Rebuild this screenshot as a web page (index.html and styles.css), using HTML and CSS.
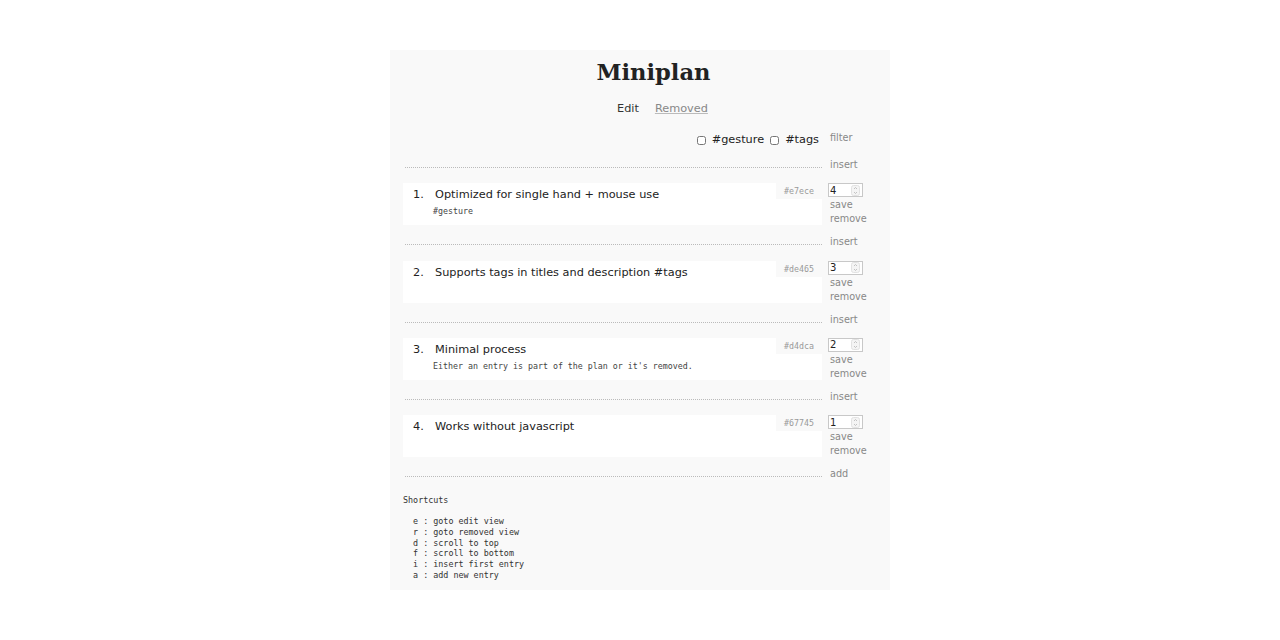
FILE: index.html
```html
<!DOCTYPE html>
<html lang="en">
<head>
    <meta charset="UTF-8">
    <meta name="viewport" content="width=device-width, initial-scale=1.0">
    <title>Miniplan</title>
    <link rel="stylesheet" href="styles.css">
</head>
<body>
    <div class="page">
        <h1>Miniplan</h1>
        <nav class="nav">
            <span class="current">Edit</span>
            <a href="#" class="nav-link">Removed</a>
        </nav>

        <div class="filter-row">
            <div class="tags">
                <label><input type="checkbox"> #gesture</label>
                <label><input type="checkbox"> #tags</label>
            </div>
            <a href="#" class="action filter">filter</a>
        </div>

        <div class="slot">
            <div class="dots"></div>
            <a href="#" class="action">insert</a>
        </div>

        <div class="entry">
            <div class="card">
                <div class="title"><span class="num">1.</span>Optimized for single hand + mouse use</div>
                <div class="desc">#gesture</div>
                <span class="hash">#e7ece</span>
            </div>
            <div class="controls">
                <div class="prio"><input type="text" value="4"><svg class="spin" width="9" height="11" viewBox="0 0 9 11"><rect x="0.5" y="0.5" width="8" height="10" rx="2" fill="#f4f4f4" stroke="#e2e2e2"/><path d="M3 4 L4.5 2.5 L6 4 M3 7 L4.5 8.5 L6 7" fill="none" stroke="#b5b5b5" stroke-width="0.8"/></svg></div>
                <a href="#" class="action">save</a>
                <a href="#" class="action">remove</a>
            </div>
        </div>

        <div class="slot">
            <div class="dots"></div>
            <a href="#" class="action">insert</a>
        </div>

        <div class="entry">
            <div class="card">
                <div class="title"><span class="num">2.</span>Supports tags in titles and description #tags</div>
                <span class="hash">#de465</span>
            </div>
            <div class="controls">
                <div class="prio"><input type="text" value="3"><svg class="spin" width="9" height="11" viewBox="0 0 9 11"><rect x="0.5" y="0.5" width="8" height="10" rx="2" fill="#f4f4f4" stroke="#e2e2e2"/><path d="M3 4 L4.5 2.5 L6 4 M3 7 L4.5 8.5 L6 7" fill="none" stroke="#b5b5b5" stroke-width="0.8"/></svg></div>
                <a href="#" class="action">save</a>
                <a href="#" class="action">remove</a>
            </div>
        </div>

        <div class="slot">
            <div class="dots"></div>
            <a href="#" class="action">insert</a>
        </div>

        <div class="entry">
            <div class="card">
                <div class="title"><span class="num">3.</span>Minimal process</div>
                <div class="desc">Either an entry is part of the plan or it's removed.</div>
                <span class="hash">#d4dca</span>
            </div>
            <div class="controls">
                <div class="prio"><input type="text" value="2"><svg class="spin" width="9" height="11" viewBox="0 0 9 11"><rect x="0.5" y="0.5" width="8" height="10" rx="2" fill="#f4f4f4" stroke="#e2e2e2"/><path d="M3 4 L4.5 2.5 L6 4 M3 7 L4.5 8.5 L6 7" fill="none" stroke="#b5b5b5" stroke-width="0.8"/></svg></div>
                <a href="#" class="action">save</a>
                <a href="#" class="action">remove</a>
            </div>
        </div>

        <div class="slot">
            <div class="dots"></div>
            <a href="#" class="action">insert</a>
        </div>

        <div class="entry">
            <div class="card">
                <div class="title"><span class="num">4.</span>Works without javascript</div>
                <span class="hash">#67745</span>
            </div>
            <div class="controls">
                <div class="prio"><input type="text" value="1"><svg class="spin" width="9" height="11" viewBox="0 0 9 11"><rect x="0.5" y="0.5" width="8" height="10" rx="2" fill="#f4f4f4" stroke="#e2e2e2"/><path d="M3 4 L4.5 2.5 L6 4 M3 7 L4.5 8.5 L6 7" fill="none" stroke="#b5b5b5" stroke-width="0.8"/></svg></div>
                <a href="#" class="action">save</a>
                <a href="#" class="action">remove</a>
            </div>
        </div>

        <div class="slot">
            <div class="dots"></div>
            <a href="#" class="action">add</a>
        </div>

        <div class="shortcuts">
            <div class="shortcuts-title">Shortcuts</div>
<pre>  e : goto edit view
  r : goto removed view
  d : scroll to top
  f : scroll to bottom
  i : insert first entry
  a : add new entry</pre>
        </div>
    </div>
</body>
</html>
```

FILE: styles.css
```css
body {
    margin: 0;
    background: #ffffff;
    font-family: "DejaVu Sans", sans-serif;
    color: #222;
}
.page {
    width: 474px;
    margin: 50px auto 0;
    padding: 8px 13px 0;
    height: 532px;
    background: #f9f9f9;
}
h1 {
    margin: 0;
    padding-left: 27px;
    text-align: center;
    font-family: "DejaVu Serif", serif;
    font-size: 22.6px;
    line-height: 28px;
}
.nav {
    display: flex;
    gap: 16px;
    margin-top: 15px;
    padding-left: 214px;
    font-size: 11.3px;
    line-height: 16px;
}
.current {
    color: #333;
}
.nav-link {
    color: #888;
    text-decoration: underline;
    text-decoration-color: #bbb;
}
.action {
    color: #888;
    text-decoration: none;
    font-size: 9.7px;
    line-height: 14px;
    display: block;
}
.filter-row {
    display: grid;
    grid-template-columns: 419px 1fr;
    column-gap: 8px;
    margin-top: 14px;
    padding-bottom: 1px;
}
.tags {
    display: flex;
    justify-content: flex-end;
    align-items: center;
    gap: 6px;
    font-size: 11.3px;
    line-height: 16px;
    padding-right: 3px;
    padding-top: 1px;
}
.tags label {
    display: flex;
    align-items: center;
    gap: 6px;
}
.tags input {
    width: 9px;
    height: 9px;
    margin: 0;
}
.slot {
    display: grid;
    grid-template-columns: 417px 1fr;
    column-gap: 8px;
    margin: 9px 0 11.3px;
    padding-left: 2px;
}
.dots {
    height: 9px;
    border-bottom: 1px dotted #bbb;
}
.entry {
    display: grid;
    grid-template-columns: 419px 1fr;
    column-gap: 6px;
}
.card {
    position: relative;
    background: #fff;
    height: 42px;
}
.title {
    font-size: 11.3px;
    line-height: 20px;
    padding: 2px 0 0 10px;
    color: #222;
}
.num {
    display: inline-block;
    width: 22px;
}
.desc {
    font-family: "DejaVu Sans Mono", monospace;
    font-size: 8.3px;
    line-height: 12px;
    color: #444;
    padding-left: 30px;
}
.hash {
    position: absolute;
    top: 0;
    right: 0;
    width: 46px;
    height: 16px;
    line-height: 16px;
    text-align: center;
    background: #f9f9f9;
    font-family: "DejaVu Sans Mono", monospace;
    font-size: 8.3px;
    color: #999;
}
.controls {
    display: flex;
    flex-direction: column;
    padding-left: 2px;
}
.prio {
    display: flex;
    align-items: center;
    width: 33px;
    height: 12px;
    margin: 0 0 1px -2px;
    border: 1px solid #c8c8c8;
    background: #fff;
}
.prio input {
    width: 18px;
    border: none;
    padding: 0 0 0 1px;
    font-family: "DejaVu Sans", sans-serif;
    font-size: 10px;
    color: #222;
    background: transparent;
    outline: none;
}
.spin {
    margin-left: auto;
    margin-right: 2px;
}
.shortcuts {
    margin-top: 14px;
    font-family: "DejaVu Sans Mono", monospace;
    font-size: 8.4px;
    color: #333;
}
.shortcuts-title {
    line-height: 10px;
}
pre {
    margin: 11px 0 0;
    font-family: "DejaVu Sans Mono", monospace;
    font-size: 8.4px;
    line-height: 10.7px;
}
```
